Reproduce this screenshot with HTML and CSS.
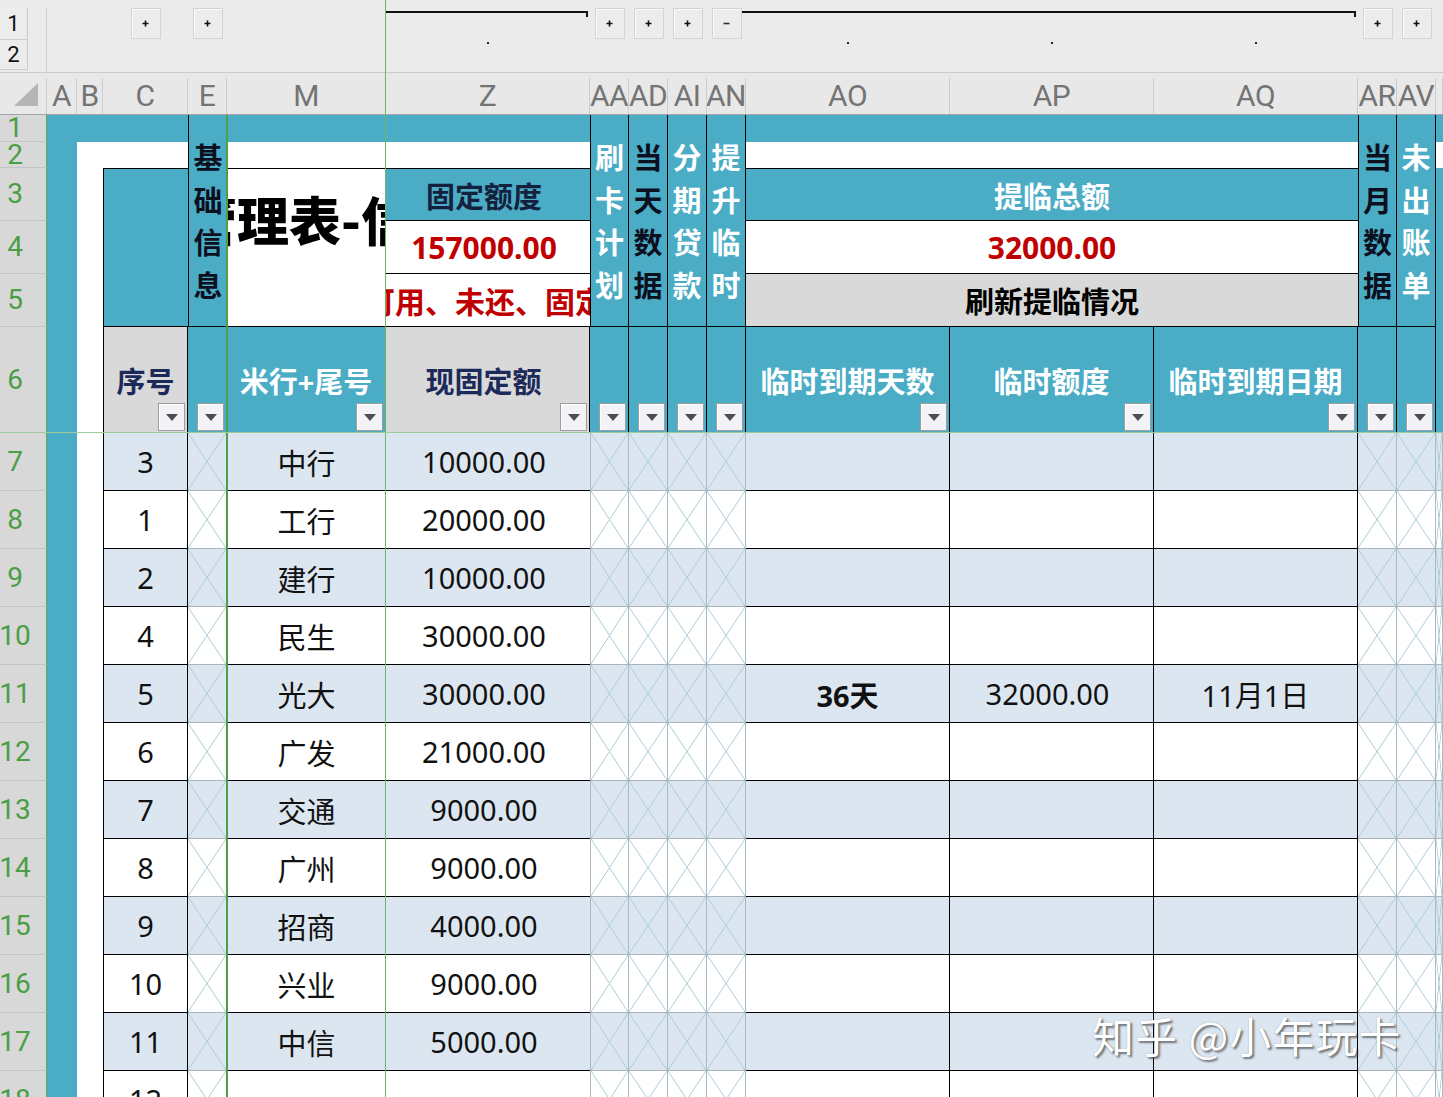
FILE: index.html
```html
<!DOCTYPE html>
<html lang="zh-CN">
<head>
<meta charset="utf-8">
<title>信用卡管理表</title>
<link rel="stylesheet" href="styles.css">
</head>
<body>
<div class="sheet">
  <div class="outline">
    <div class="levels c1 r1 s2r">
      <div class="lvl">1</div>
      <div class="lvl">2</div>
    </div>
    <div class="ob c4 r1"><svg width="7" height="7" viewBox="0 0 7 7"><path d="M3.5 0.5v6M0.5 3.5h6" stroke="#111" stroke-width="1.6"/></svg></div>
    <div class="ob c5 r1"><svg width="7" height="7" viewBox="0 0 7 7"><path d="M3.5 0.5v6M0.5 3.5h6" stroke="#111" stroke-width="1.6"/></svg></div>
    <div class="brk c7 r1"></div>
    <div class="ob c8 r1"><svg width="7" height="7" viewBox="0 0 7 7"><path d="M3.5 0.5v6M0.5 3.5h6" stroke="#111" stroke-width="1.6"/></svg></div>
    <div class="ob c9 r1"><svg width="7" height="7" viewBox="0 0 7 7"><path d="M3.5 0.5v6M0.5 3.5h6" stroke="#111" stroke-width="1.6"/></svg></div>
    <div class="ob c10 r1"><svg width="7" height="7" viewBox="0 0 7 7"><path d="M3.5 0.5v6M0.5 3.5h6" stroke="#111" stroke-width="1.6"/></svg></div>
    <div class="ob c11 r1"><svg width="7" height="7" viewBox="0 0 7 7"><path d="M0.5 3.5h6" stroke="#333" stroke-width="1.6"/></svg></div>
    <div class="brk brk-wide c12 r1 s3c"></div>
    <div class="ob c15 r1"><svg width="7" height="7" viewBox="0 0 7 7"><path d="M3.5 0.5v6M0.5 3.5h6" stroke="#111" stroke-width="1.6"/></svg></div>
    <div class="ob c16 r1"><svg width="7" height="7" viewBox="0 0 7 7"><path d="M3.5 0.5v6M0.5 3.5h6" stroke="#111" stroke-width="1.6"/></svg></div>
    <div class="dot c7 r2"></div>
    <div class="dot c12 r2"></div>
    <div class="dot c13 r2"></div>
    <div class="dot c14 r2"></div>
  </div>

  <div class="colhdr">
    <div class="ch corner"><svg width="24" height="23" viewBox="0 0 24 23"><polygon points="24,0 24,23 0,23" fill="#b5b5b5"/></svg></div>
    <div class="ch">A</div>
    <div class="ch">B</div>
    <div class="ch">C</div>
    <div class="ch">E</div>
    <div class="ch">M</div>
    <div class="ch">Z</div>
    <div class="ch">AA</div>
    <div class="ch">AD</div>
    <div class="ch">AI</div>
    <div class="ch">AN</div>
    <div class="ch">AO</div>
    <div class="ch">AP</div>
    <div class="ch">AQ</div>
    <div class="ch">AR</div>
    <div class="ch">AV</div>
    <div class="ch"></div>
  </div>

  <div class="head">
    <div class="rh c1 r1">1</div>
    <div class="rh c1 r2">2</div>
    <div class="rh c1 r3">3</div>
    <div class="rh c1 r4">4</div>
    <div class="rh c1 r5">5</div>
    <div class="rh c1 r6">6</div>
    <div class="teal c2 r1 s6r"></div>
    <div class="teal c3 r1 s15c"></div>
    <div class="teal c17 r3 s4r"></div>
    <div class="teal c4 r3 s3r bl bt bb"></div>
    <div class="vt ink c5 r1 s5r bl bb">基础信息</div>
    <div class="title c6 r3 s3r bt bb"><span>管理表-信</span></div>
    <div class="hz teal navy c7 r3 bt bb">固定额度</div>
    <div class="hz red c7 r4 bb">157000.00</div>
    <div class="hz redtxt c7 r5 bb"><span>可用、未还、固定</span></div>
    <div class="vt wt c8 r1 s5r bl br bb">刷卡计划</div>
    <div class="vt ink c9 r1 s5r br bb">当天数据</div>
    <div class="vt wt c10 r1 s5r br bb">分期贷款</div>
    <div class="vt wt c11 r1 s5r br bb">提升临时</div>
    <div class="hz teal wt c12 r3 s3c bt bb">提临总额</div>
    <div class="hz red c12 r4 s3c bb">32000.00</div>
    <div class="hz graybg c12 r5 s3c bb">刷新提临情况</div>
    <div class="vt ink c15 r1 s5r bl br bb">当月数据</div>
    <div class="vt wt c16 r1 s5r br bb">未出账单</div>

    <div class="h6 gray c4 r6 bl">序号<i class="fb"></i></div>
    <div class="h6 teal c5 r6"><i class="fb"></i></div>
    <div class="h6 teal c6 r6">米行+尾号<i class="fb"></i></div>
    <div class="h6 gray c7 r6">现固定额<i class="fb"></i></div>
    <div class="h6 teal c8 r6"><i class="fb"></i></div>
    <div class="h6 teal c9 r6"><i class="fb"></i></div>
    <div class="h6 teal c10 r6"><i class="fb"></i></div>
    <div class="h6 teal c11 r6"><i class="fb"></i></div>
    <div class="h6 teal c12 r6">临时到期天数<i class="fb"></i></div>
    <div class="h6 teal c13 r6">临时额度<i class="fb"></i></div>
    <div class="h6 teal c14 r6">临时到期日期<i class="fb"></i></div>
    <div class="h6 teal c15 r6"><i class="fb"></i></div>
    <div class="h6 teal c16 r6"><i class="fb"></i></div>
  </div>

  <div class="row b"><div class="rh">7</div><div class="ta"></div><div class="wb"></div><div class="cn">3</div><div class="x"></div><div class="m">中行</div><div class="z">10000.00</div><div class="x xl"></div><div class="x"></div><div class="x"></div><div class="x"></div><div class="d"></div><div class="d"></div><div class="d"></div><div class="x"></div><div class="x"></div><div class="x"></div></div>
  <div class="row"><div class="rh">8</div><div class="ta"></div><div class="wb"></div><div class="cn">1</div><div class="x"></div><div class="m">工行</div><div class="z">20000.00</div><div class="x xl"></div><div class="x"></div><div class="x"></div><div class="x"></div><div class="d"></div><div class="d"></div><div class="d"></div><div class="x"></div><div class="x"></div><div class="x"></div></div>
  <div class="row b"><div class="rh">9</div><div class="ta"></div><div class="wb"></div><div class="cn">2</div><div class="x"></div><div class="m">建行</div><div class="z">10000.00</div><div class="x xl"></div><div class="x"></div><div class="x"></div><div class="x"></div><div class="d"></div><div class="d"></div><div class="d"></div><div class="x"></div><div class="x"></div><div class="x"></div></div>
  <div class="row"><div class="rh">10</div><div class="ta"></div><div class="wb"></div><div class="cn">4</div><div class="x"></div><div class="m">民生</div><div class="z">30000.00</div><div class="x xl"></div><div class="x"></div><div class="x"></div><div class="x"></div><div class="d"></div><div class="d"></div><div class="d"></div><div class="x"></div><div class="x"></div><div class="x"></div></div>
  <div class="row b"><div class="rh">11</div><div class="ta"></div><div class="wb"></div><div class="cn">5</div><div class="x"></div><div class="m">光大</div><div class="z">30000.00</div><div class="x xl"></div><div class="x"></div><div class="x"></div><div class="x"></div><div class="d bold">36天</div><div class="d num">32000.00</div><div class="d">11月1日</div><div class="x"></div><div class="x"></div><div class="x"></div></div>
  <div class="row"><div class="rh">12</div><div class="ta"></div><div class="wb"></div><div class="cn">6</div><div class="x"></div><div class="m">广发</div><div class="z">21000.00</div><div class="x xl"></div><div class="x"></div><div class="x"></div><div class="x"></div><div class="d"></div><div class="d"></div><div class="d"></div><div class="x"></div><div class="x"></div><div class="x"></div></div>
  <div class="row b"><div class="rh">13</div><div class="ta"></div><div class="wb"></div><div class="cn">7</div><div class="x"></div><div class="m">交通</div><div class="z">9000.00</div><div class="x xl"></div><div class="x"></div><div class="x"></div><div class="x"></div><div class="d"></div><div class="d"></div><div class="d"></div><div class="x"></div><div class="x"></div><div class="x"></div></div>
  <div class="row"><div class="rh">14</div><div class="ta"></div><div class="wb"></div><div class="cn">8</div><div class="x"></div><div class="m">广州</div><div class="z">9000.00</div><div class="x xl"></div><div class="x"></div><div class="x"></div><div class="x"></div><div class="d"></div><div class="d"></div><div class="d"></div><div class="x"></div><div class="x"></div><div class="x"></div></div>
  <div class="row b"><div class="rh">15</div><div class="ta"></div><div class="wb"></div><div class="cn">9</div><div class="x"></div><div class="m">招商</div><div class="z">4000.00</div><div class="x xl"></div><div class="x"></div><div class="x"></div><div class="x"></div><div class="d"></div><div class="d"></div><div class="d"></div><div class="x"></div><div class="x"></div><div class="x"></div></div>
  <div class="row"><div class="rh">16</div><div class="ta"></div><div class="wb"></div><div class="cn">10</div><div class="x"></div><div class="m">兴业</div><div class="z">9000.00</div><div class="x xl"></div><div class="x"></div><div class="x"></div><div class="x"></div><div class="d"></div><div class="d"></div><div class="d"></div><div class="x"></div><div class="x"></div><div class="x"></div></div>
  <div class="row b"><div class="rh">17</div><div class="ta"></div><div class="wb"></div><div class="cn">11</div><div class="x"></div><div class="m">中信</div><div class="z">5000.00</div><div class="x xl"></div><div class="x"></div><div class="x"></div><div class="x"></div><div class="d"></div><div class="d"></div><div class="d"></div><div class="x"></div><div class="x"></div><div class="x"></div></div>
  <div class="row"><div class="rh">18</div><div class="ta"></div><div class="wb"></div><div class="cn">12</div><div class="x"></div><div class="m"></div><div class="z"></div><div class="x xl"></div><div class="x"></div><div class="x"></div><div class="x"></div><div class="d"></div><div class="d"></div><div class="d"></div><div class="x"></div><div class="x"></div><div class="x"></div></div>

  <div class="fz fz-e"></div>
  <div class="fz fz-m"></div>
  <div class="fz fz-h"></div>
  <div class="wm">知乎 @小年玩卡</div>
</div>
</body>
</html>
```

FILE: styles.css
```css
* { box-sizing: border-box; margin: 0; padding: 0; }
:root {
  --cols: 47px 30px 26px 85px 39px 159px 204px 39px 39px 39px 39px 204px 204px 204px 39px 39px 7px;
  --teal: #4bacc6;
  --blue: #dce6f1;
  --gray: #d9d9d9;
  --red: #c00000;
  --navy: #1c2a5a;
}
html, body { width: 1443px; height: 1097px; overflow: hidden; background: #fff; }
body { font-family: "Noto Sans", "Noto Sans CJK SC", sans-serif; color: #111; }
.sheet { position: relative; width: 1443px; height: 1097px; overflow: hidden; }

/* grid placement helpers */
.c1 { grid-column-start: 1; } .c2 { grid-column-start: 2; } .c3 { grid-column-start: 3; }
.c4 { grid-column-start: 4; } .c5 { grid-column-start: 5; } .c6 { grid-column-start: 6; }
.c7 { grid-column-start: 7; } .c8 { grid-column-start: 8; } .c9 { grid-column-start: 9; }
.c10 { grid-column-start: 10; } .c11 { grid-column-start: 11; } .c12 { grid-column-start: 12; }
.c13 { grid-column-start: 13; } .c14 { grid-column-start: 14; } .c15 { grid-column-start: 15; }
.c16 { grid-column-start: 16; } .c17 { grid-column-start: 17; }
.r1 { grid-row-start: 1; } .r2 { grid-row-start: 2; } .r3 { grid-row-start: 3; }
.r4 { grid-row-start: 4; } .r5 { grid-row-start: 5; } .r6 { grid-row-start: 6; }
.s3c { grid-column-end: span 3; } .s15c { grid-column-end: span 15; }
.s2r { grid-row-end: span 2; } .s3r { grid-row-end: span 3; } .s4r { grid-row-end: span 4; }
.s5r { grid-row-end: span 5; } .s6r { grid-row-end: span 6; }
.bl { border-left: 1px solid #000; } .br { border-right: 1px solid #000; }
.bt { border-top: 1px solid #000; } .bb { border-bottom: 1px solid #000; }

/* outline bar */
.outline {
  display: grid;
  grid-template-columns: var(--cols);
  grid-template-rows: 40px 32px;
  height: 73px;
  background: #ebebeb;
  border-bottom: 1px solid #cbcbcb;
}
.levels { margin-top: 8px; border-right: 1px solid #cfcfcf; }
.lvl {
  width: 28px; height: 32px;
  border-right: 1px solid #cdcdcd; border-bottom: 1px solid #cdcdcd;
  background: #ececec;
  font: 400 22px/32px Roboto, sans-serif; color: #111; text-align: center;
}
.lvl + .lvl { height: 30px; line-height: 30px; }
.ob {
  align-self: start; justify-self: center;
  margin-top: 8px; width: 30px; height: 31px;
  border: 1px solid #d3d3d3; background: #ececec;
  box-shadow: inset 1px 1px 0 #fafafa;
  display: flex; align-items: center; justify-content: center;
}
.brk {
  align-self: start; margin-top: 11px; margin-right: 2px; height: 6px;
  border-top: 2px solid #111; border-right: 2px solid #111;
}
.brk-wide { margin-left: -4px; }
.dot { justify-self: center; align-self: start; margin-top: 2px; width: 2px; height: 2px; background: #222; }

/* column header letters */
.colhdr {
  display: grid;
  grid-template-columns: var(--cols);
  height: 42px;
  padding-top: 5px;
  background: #e8e8e8;
  border-bottom: 1px solid #a5a5a5;
}
.ch {
  border-right: 1px solid #cdcdcd;
  display: flex; align-items: center; justify-content: center;
  font: 400 30px Roboto, sans-serif; color: #747474; letter-spacing: -0.5px;
  overflow: hidden; white-space: nowrap; padding-bottom: 2px;
}
.ch.corner { justify-content: flex-end; align-items: flex-end; padding: 0 8px 8px 0; }

/* header block rows 1-6 */
.head {
  display: grid;
  grid-template-columns: var(--cols);
  grid-template-rows: 27px 26px 53px 53px 53px 106px;
  background: #fff;
}
.rh {
  background: #d8d8d8;
  border-right: 1px solid #5ea95a;
  border-bottom: 1px solid #c4c4c4;
  color: #4a9e46;
  font: 400 28px/22px Roboto, sans-serif;
  display: flex; align-items: center; justify-content: center;
  padding-right: 16px;
  overflow: visible; white-space: nowrap;
}
.teal { background: var(--teal); }
.vt {
  background: var(--teal);
  font: 700 29px/42.5px "Noto Sans CJK SC", sans-serif;
  word-break: break-all; text-align: center;
  padding: 20px 3px 0;
}
.ink { color: #0b0f1e; }
.wt { color: #fff; }
.navy { color: #14213d; }
.hz {
  display: flex; align-items: center; justify-content: center;
  font-weight: 700; font-size: 29px; white-space: nowrap; overflow: hidden;
}
.hz.c7 { padding-right: 8px; }
.red { color: var(--red); font-size: 30px; }
.redtxt { color: var(--red); font-size: 30px; justify-content: flex-start; }
.hz.redtxt { padding-right: 0; }
.redtxt span { margin-left: -21px; }
.graybg { background: var(--gray); color: #000; }
.title {
  overflow: hidden; white-space: nowrap;
  font: 900 52px/52px "Noto Sans CJK SC", sans-serif; color: #000;
  padding-top: 24px; background: #fff;
}
.title span { display: inline-block; margin-left: -42px; }

.h6 {
  position: relative;
  display: flex; align-items: center; justify-content: center;
  font-weight: 700; font-size: 29px; white-space: nowrap;
  border-right: 1px solid #000; border-bottom: 1px solid #000;
}
.h6.gray { background: var(--gray); color: var(--navy); }
.h6.teal { color: #fff; }
.h6.c7 { padding-right: 8px; }
.fb {
  position: absolute; right: 2px; bottom: 1px;
  width: 27px; height: 28px;
  background: #f3f2f6;
  border: 1px solid #9d9d9d;
  box-shadow: inset 1px 1px 0 #fff;
  display: flex; align-items: center; justify-content: center;
}
.fb::before {
  content: "";
  border-left: 6px solid transparent; border-right: 6px solid transparent;
  border-top: 7px solid #4d4d4d;
}

/* data rows */
.row {
  display: grid;
  grid-template-columns: var(--cols);
  height: 58px;
  background: #fff;
  font-size: 29px;
}
.row.b { background: var(--blue); }
.row > div {
  display: flex; align-items: center; justify-content: center;
  white-space: nowrap; overflow: hidden; color: #111;
}
.row > .rh { color: #4a9e46; }
.ta { background: var(--teal); }
.wb { background: #fff; }
.cn { border-left: 1px solid #000; border-right: 1px solid #000; border-bottom: 1px solid #000; }
.m, .z, .d { border-bottom: 1px solid #000; }
.z { padding-right: 8px; }
.d { border-right: 1px solid #000; }
.d.num { padding-right: 8px; }
.bold { font-weight: 700; }
.x {
  border-right: 1px solid #a9bac2;
  border-bottom: 1px solid #a9b4ba;
  background-image:
    linear-gradient(to top right, transparent calc(50% - 0.8px), #a9ccd6 50%, transparent calc(50% + 0.8px)),
    linear-gradient(to bottom right, transparent calc(50% - 0.8px), #a9ccd6 50%, transparent calc(50% + 0.8px));
}
.xl { border-left: 1px solid #a9bac2; }

/* freeze pane lines and watermark (overlays) */
.fz { position: absolute; }
.fz-e { left: 226px; top: 115px; width: 2px; height: 982px; background: #4f9f4a; }
.fz-m { left: 385px; top: 0; width: 1px; height: 1097px; background: #6db56a; }
.fz-h { left: 0; top: 432px; width: 1443px; height: 1px; background: #9ccc98; }
.wm {
  position: absolute; left: 1092px; top: 1004px;
  font: 400 42px "Noto Sans CJK SC", sans-serif;
  color: #fff; white-space: nowrap; letter-spacing: 1px;
  text-shadow: 2px 2px 2px rgba(60, 60, 60, 0.65), 0 0 1px rgba(0, 0, 0, 0.35);
}
```
